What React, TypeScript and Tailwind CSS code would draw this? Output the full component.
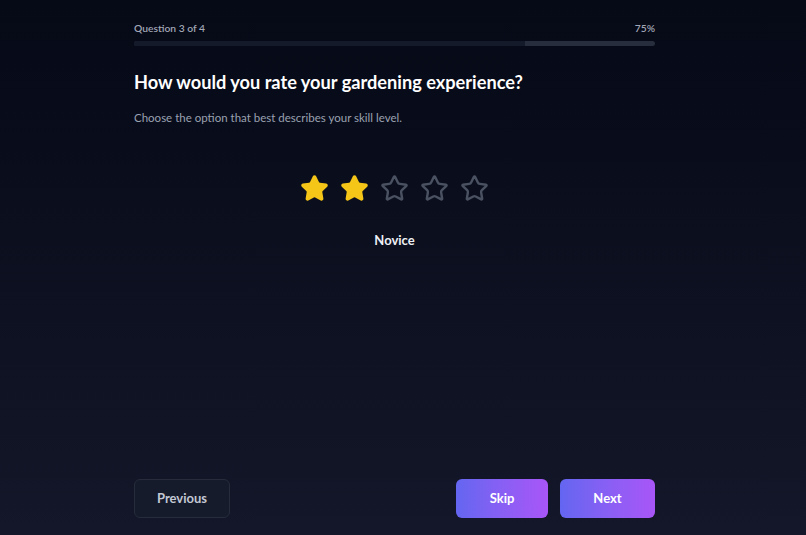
import { Star } from "lucide-react";

const rating = 2;

export default function App() {
    return (
        <div
            className="h-[535px] w-full bg-gradient-to-b from-[#060916] to-[#131729] pr-[17px]"
            style={{ fontFamily: "Lato, 'Open Sans', sans-serif" }}
        >
            <div className="mx-auto flex h-full w-[521px] flex-col pt-[21px] pb-[17px]">
                {/* Progress */}
                <div className="flex items-center justify-between text-[10.3px] leading-[15px]">
                    <span className="font-semibold text-[#a1a7b5]">Question 3 of 4</span>
                    <span className="font-semibold text-[#a1a7b5]">75%</span>
                </div>
                <div className="mt-[5px] h-[5px] w-full overflow-hidden rounded-full bg-[#272d3d]">
                    <div className="h-full bg-[#151a2a]" style={{ width: "75%" }} />
                </div>

                <h1 className="mt-[24px] text-[18.2px] leading-[24px] font-bold text-white">
                    How would you rate your gardening experience?
                </h1>
                <p className="mt-[16px] text-[11.5px] leading-[16px] text-[#9aa1b1]">
                    Choose the option that best describes your skill level.
                </p>

                {/* Stars */}
                <div className="mt-[48px] flex justify-center gap-[11px]">
                    {[1, 2, 3, 4, 5].map((i) => (
                        <Star
                            key={i}
                            size={29}
                            strokeWidth={2}
                            className={i <= rating ? "fill-[#f5c518] text-[#f5c518]" : "fill-none text-[#4a5161]"}
                        />
                    ))}
                </div>
                <div className="mt-[28px] text-center text-[13px] leading-[18px] font-bold text-[#eef0f5]">
                    Novice
                </div>

                {/* Footer */}
                <div className="mt-auto flex items-center justify-between">
                    <button className="h-[39px] w-[96px] rounded-[6px] border border-[#262c3c] bg-[#161b2b] text-[13px] font-bold text-[#c3c8d4]">
                        Previous
                    </button>
                    <div className="flex gap-[12px]">
                        <button className="h-[39px] w-[92px] rounded-[6px] bg-gradient-to-r from-[#6366f1] to-[#a855f7] text-[13px] font-bold text-white">
                            Skip
                        </button>
                        <button className="h-[39px] w-[95px] rounded-[6px] bg-gradient-to-r from-[#6366f1] to-[#a855f7] text-[13px] font-bold text-white">
                            Next
                        </button>
                    </div>
                </div>
            </div>
        </div>
    );
}
